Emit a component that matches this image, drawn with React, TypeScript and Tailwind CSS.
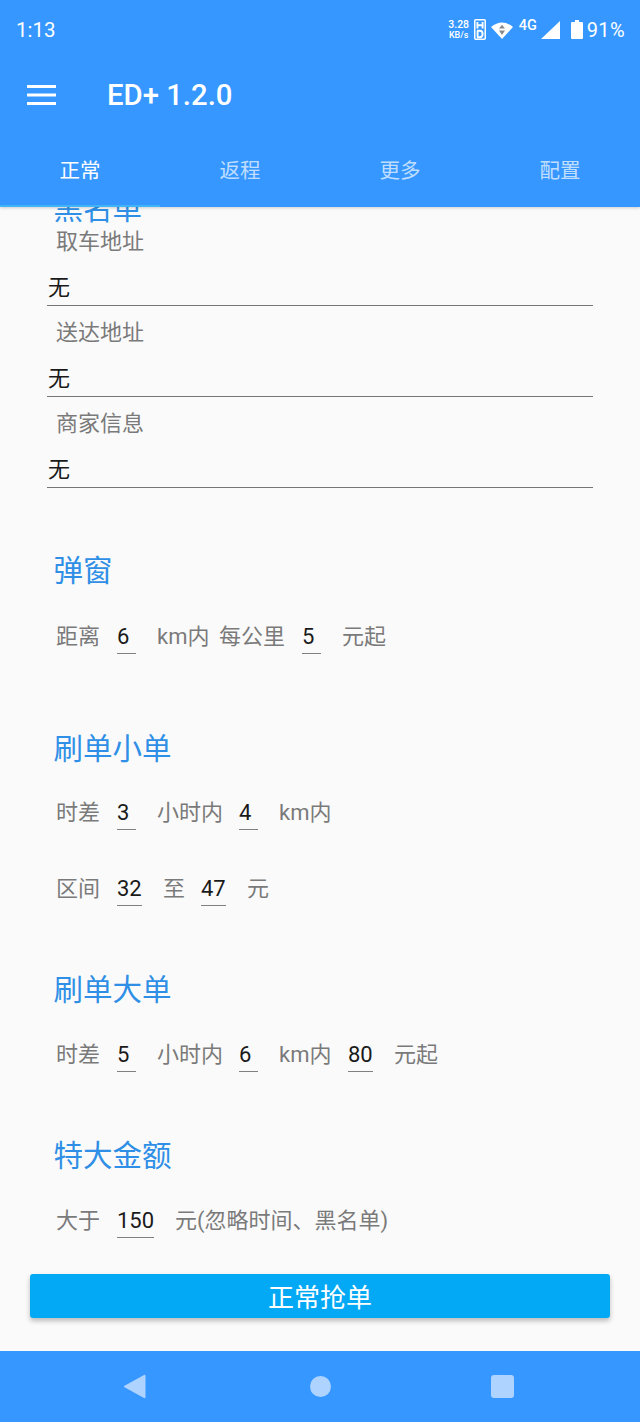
const FONT = "font-['Roboto','Noto_Sans_CJK_SC',sans-serif]";

function Heading({ text, className }: { text: string; className: string }) {
  return <h2 className={`pl-[53.5px] text-[29.5px] leading-[40px] font-normal text-[#2f8fe6] ${className}`}>{text}</h2>;
}

function AddressField({ label }: { label: string }) {
  return (
    <div className="pl-[47px] pr-[47px]">
      <div className="pl-[9px] text-[22px] leading-[30px] text-[#7a7a7a]">{label}</div>
      <div className="mt-[18px] h-[31px] border-b-[1.5px] border-[#757575] pl-[1px] text-[22px] leading-[25px] text-[#1a1a1a]">无</div>
    </div>
  );
}

function Value({ text, width }: { text: string; width: string }) {
  return (
    <span className={`${width} h-[35px] self-start border-b-[1.5px] border-[#808080] text-left text-[22px] leading-[36px] text-[#1a1a1a]`}>
      {text}
    </span>
  );
}

function Row({ children, className }: { children: React.ReactNode; className: string }) {
  return <div className={`flex h-[36px] items-center pl-[56px] text-[22px] leading-[36px] text-[#7a7a7a] ${className}`}>{children}</div>;
}

function Tab({ text, active }: { text: string; active?: boolean }) {
  return (
    <div className={`relative flex h-[75px] flex-1 items-center justify-center pt-[3px] text-[20.5px] ${active ? 'text-white' : 'text-white/70'}`}>
      {text}
      {active && <div className="absolute bottom-0 left-0 h-[2px] w-full bg-[#40b4f8]" />}
    </div>
  );
}

function StatusIcons() {
  return (
    <div className="flex items-center">
      <div className="mr-[5px] flex w-[20px] flex-col items-center text-[10.5px] font-medium leading-[11px]">
        <span>3.28</span>
        <span className="text-[9px] leading-[10px]">KB/s</span>
      </div>
      <svg width="12" height="21" viewBox="0 0 12 21" className="mr-[5px]">
        <rect x="0.75" y="0.75" width="10.5" height="19.5" rx="1" fill="none" stroke="white" strokeWidth="1.5" />
        <path d="M3.4 3v6.5M8.6 3v6.5M3.4 6.2h5.2M3.6 11.8v6.4M3 11.8h2.8a2.8 3.2 0 0 1 0 6.4H3" fill="none" stroke="white" strokeWidth="1.9" />
      </svg>
      <svg width="22" height="18" viewBox="0 0 22 18" className="mr-[6px]">
        <path d="M0 6 Q11 -3 22 6 L11 18 Z" fill="white" />
        <path d="M11 3.8l3 3.6H8zM11 14l-3-4.6h6z" fill="#8a8a8a" />
      </svg>
      <span className="mb-[8px] mr-[4px] w-[18px] text-[14.5px] font-medium leading-[14px]">4G</span>
      <svg width="19" height="18" viewBox="0 0 19 18" className="mr-[11px]">
        <path d="M0 18 L19 0 V18 Z" fill="white" />
      </svg>
      <svg width="12" height="19" viewBox="0 0 12 19" className="mr-[4px]">
        <path d="M4 0h4v2h3a1 1 0 0 1 1 1v15a1 1 0 0 1-1 1H1a1 1 0 0 1-1-1V3a1 1 0 0 1 1-1h3z" fill="white" />
      </svg>
      <span className="text-[20px] leading-[24px] tracking-[0.4px]">91%</span>
    </div>
  );
}

export default function App() {
  return (
    <div className={`flex h-[1422px] w-[640px] flex-col overflow-hidden bg-[#fafafa] ${FONT}`}>
      <header className="relative z-10 h-[207px] shrink-0 bg-[#3597ff] text-white shadow-[0_1px_3px_rgba(0,0,0,0.18)]">
        <div className="flex h-[58px] items-center justify-between pl-[16px] pr-[15px] pt-[1px]">
          <span className="text-[20.5px] leading-[24px]">1:13</span>
          <StatusIcons />
        </div>
        <div className="flex h-[74px] items-center pl-[27px]">
          <svg width="29" height="20" viewBox="0 0 29 20" className="mr-[51px]">
            <path d="M0 1.5h29M0 10h29M0 18.5h29" stroke="white" strokeWidth="2.8" />
          </svg>
          <span className="text-[29.3px] font-medium leading-[36px]">ED+ 1.2.0</span>
        </div>
        <nav className="flex">
          <Tab text="正常" active />
          <Tab text="返程" />
          <Tab text="更多" />
          <Tab text="配置" />
        </nav>
      </header>

      <main className="min-h-0 flex-1 overflow-hidden">
        <Heading text="黑名单" className="-mt-[18px]" />
        <div className="-mt-[2px] flex flex-col gap-[12px]">
          <AddressField label="取车地址" />
          <AddressField label="送达地址" />
          <AddressField label="商家信息" />
        </div>

        <Heading text="弹窗" className="mt-[63px]" />
        <Row className="mt-[28px]">
          <span className="w-[61px]">距离</span>
          <Value text="6" width="w-[19px]" />
          <span className="ml-[21px] w-[62px]">km内</span>
          <span className="w-[83px]">每公里</span>
          <Value text="5" width="w-[19px]" />
          <span className="ml-[21px]">元起</span>
        </Row>

        <Heading text="刷单小单" className="mt-[74px]" />
        <Row className="mt-[26px]">
          <span className="w-[61px]">时差</span>
          <Value text="3" width="w-[19px]" />
          <span className="ml-[21px] w-[82px]">小时内</span>
          <Value text="4" width="w-[19px]" />
          <span className="ml-[21px]">km内</span>
        </Row>
        <Row className="mt-[40px]">
          <span className="w-[61px]">区间</span>
          <Value text="32" width="w-[25px]" />
          <span className="ml-[21px] w-[38px]">至</span>
          <Value text="47" width="w-[25px]" />
          <span className="ml-[21px]">元</span>
        </Row>

        <Heading text="刷单大单" className="mt-[63px]" />
        <Row className="mt-[27px]">
          <span className="w-[61px]">时差</span>
          <Value text="5" width="w-[19px]" />
          <span className="ml-[21px] w-[82px]">小时内</span>
          <Value text="6" width="w-[19px]" />
          <span className="ml-[21px] w-[69px]">km内</span>
          <Value text="80" width="w-[25px]" />
          <span className="ml-[21px]">元起</span>
        </Row>

        <Heading text="特大金额" className="mt-[63px]" />
        <Row className="mt-[27px]">
          <span className="w-[61px]">大于</span>
          <Value text="150" width="w-[37px]" />
          <span className="ml-[21px]">元(忽略时间、黑名单)</span>
        </Row>

        <div className="mt-[35px] px-[30px]">
          <button className="h-[44px] w-full rounded-[3px] bg-[#03a9f4] pt-[4px] text-[26px] leading-[40px] text-white shadow-[0_3px_5px_rgba(0,0,0,0.25)]">
            正常抢单
          </button>
        </div>
      </main>

      <footer className="flex h-[71px] shrink-0 items-center bg-[#3597ff] pl-[124px]">
        <svg width="22" height="25" viewBox="0 0 22 25">
          <path d="M20 1a1 1 0 0 1 1.5 1v21a1 1 0 0 1-1.5 1L1 13.5a1 1 0 0 1 0-2z" fill="#aed3ff" />
        </svg>
        <div className="ml-[164px] h-[21px] w-[21px] rounded-full bg-[#aed3ff]" />
        <div className="ml-[160px] h-[23px] w-[23px] rounded-[3px] bg-[#aed3ff]" />
      </footer>
    </div>
  );
}
